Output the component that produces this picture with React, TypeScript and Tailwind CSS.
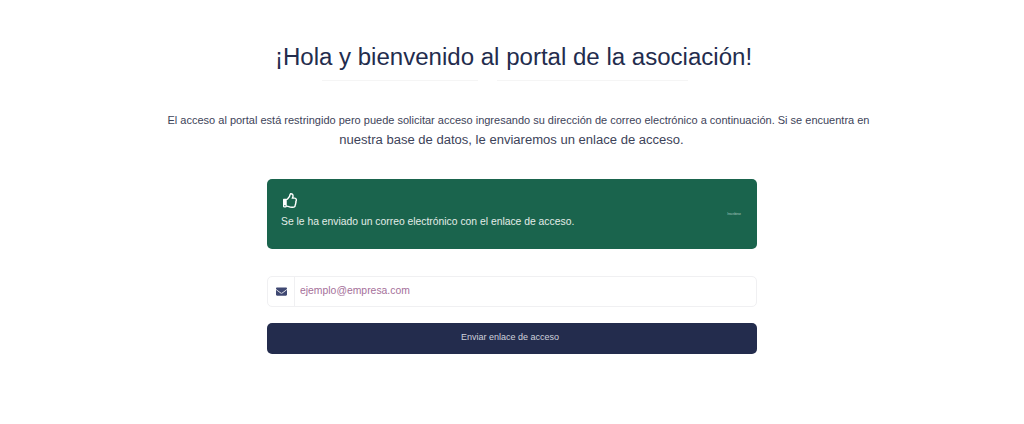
import { FaEnvelope, FaRegThumbsUp } from 'react-icons/fa'

export default function App() {
  return (
    <div className="flex h-[424px] w-[1024px] flex-col items-center overflow-hidden bg-white pt-[40px] font-['Liberation_Sans',Arial,sans-serif]">
      <h1 className="ml-[3px] h-[34px] text-[24.05px] leading-[34px] text-[#232c4d]">
        ¡Hola y bienvenido al portal de la asociación!
      </h1>
      <div className="mt-[6px] mr-[14px] flex h-px w-[366px] gap-[19px]">
        <div className="w-[156px] bg-[#f5f5f5]" />
        <div className="w-[191px] bg-[#f5f5f5]" />
      </div>
      <p className="mt-[29px] ml-[13px] h-[20px] text-[11px] leading-[20px] text-[#3d4359]">
        El acceso al portal está restringido pero puede solicitar acceso ingresando su dirección de correo electrónico a continuación. Si se encuentra en
      </p>
      <p className="mr-px h-[20px] text-[13.05px] leading-[20px] text-[#3d4359]">
        nuestra base de datos, le enviaremos un enlace de acceso.
      </p>

      <div className="mt-[29px] flex h-[70px] w-[490px] items-center justify-between rounded-[5px] bg-[#1a644d] pl-[14px] pr-[16px]">
        <div className="flex flex-col gap-[7px] pb-[6px]">
          <FaRegThumbsUp className="ml-[2px] h-[15px] w-[15px] text-white" />
          <span className="text-[10.35px] leading-[14px] text-[#e3ece8]">
            Se le ha enviado un correo electrónico con el enlace de acceso.
          </span>
        </div>
        <span className="text-[3px] leading-none text-[#b5d0c6]">Inscribirse</span>
      </div>

      <div className="mt-[27px] flex h-[31px] w-[490px] rounded-[5px] border border-[#f0f0f2]">
        <div className="flex w-[27px] items-center justify-center border-r border-[#f0f0f2]">
          <FaEnvelope className="h-[11px] w-[11px] text-[#3f4872]" />
        </div>
        <input
          className="min-w-0 flex-1 bg-transparent pb-[2px] pl-[5px] text-[10.4px] outline-none placeholder:text-[#a5709a]"
          placeholder="ejemplo@empresa.com"
        />
      </div>

      <button className="mt-[16px] flex h-[31px] w-[490px] items-center justify-center rounded-[5px] bg-[#232c4d] pr-[4px] pb-[2px] text-[9px] text-[#cfd2dc]">
        Enviar enlace de acceso
      </button>
    </div>
  )
}
